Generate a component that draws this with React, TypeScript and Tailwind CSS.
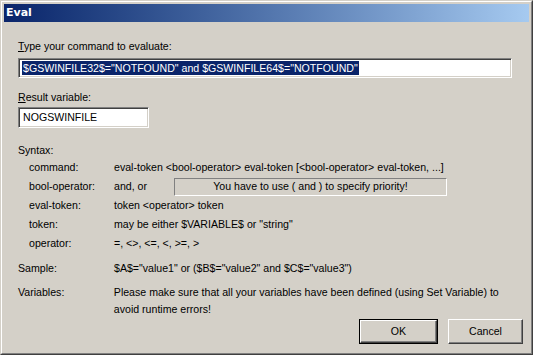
const sunken =
  'border border-t-[#808080] border-l-[#808080] border-r-white border-b-white shadow-[inset_1px_1px_#404040,inset_-1px_-1px_#D4D0C8] bg-white';

const syntaxRows: [string, React.ReactNode][] = [
  ['command:', 'eval-token <bool-operator> eval-token [<bool-operator> eval-token, ...]'],
  [
    'bool-operator:',
    <div className="flex items-center">
      <span className="w-[60px]">and, or</span>
      <div className="w-[273px] h-[18px] border border-t-[#808080] border-l-[#808080] border-r-white border-b-white flex items-center justify-center">
        You have to use ( and ) to specify priority!
      </div>
    </div>,
  ],
  ['eval-token:', 'token <operator> token'],
  ['token:', 'may be either $VARIABLE$ or "string"'],
  ['operator:', '=, <>, <=, <, >=, >'],
];

const raised =
  'h-[23px] border border-t-white border-l-white border-r-[#404040] border-b-[#404040] shadow-[inset_-1px_-1px_#808080] flex items-center justify-center';

export default function App() {
  return (
    <div
      className="w-[533px] h-[355px] bg-[#D4D0C8] border border-t-[#D4D0C8] border-l-[#D4D0C8] border-r-[#404040] border-b-[#404040] text-[10.6px] text-black flex flex-col"
      style={{ fontFamily: '"Liberation Sans", Arial, sans-serif' }}
    >
      <div className="flex-1 flex flex-col border border-t-white border-l-white border-r-[#808080] border-b-[#808080] p-[2px]">
        <div className="h-[18px] bg-gradient-to-r from-[#0A246A] to-[#A6CAF0] flex items-center px-[2px]">
          <span className="text-white font-bold text-[11px]" style={{ fontFamily: '"DejaVu Sans", sans-serif' }}>
            Eval
          </span>
        </div>

        <div className="flex-1 flex flex-col pl-[14px] pr-[16px] pt-[17px]">
          <div className="h-[14px] leading-[14px]">
            <span className="underline">T</span>ype your command to evaluate:
          </div>
          <div className={`mt-[5px] h-[20px] w-[494px] flex items-center pl-[3px] ${sunken}`}>
            <span className="bg-[#0A246A] text-white leading-[14px] px-[1px]">
              $GSWINFILE32$="NOTFOUND" and $GSWINFILE64$="NOTFOUND"
            </span>
          </div>

          <div className="mt-[12px] h-[14px] leading-[14px]">
            <span className="underline">R</span>esult variable:
          </div>
          <div className={`mt-[3px] h-[21px] w-[131px] flex items-center pl-[4px] ${sunken}`}>
            NOGSWINFILE
          </div>

          <div className="mt-[15px] h-[14px] leading-[14px]">Syntax:</div>
          <div className="mt-[1px] flex flex-col">
            {syntaxRows.map(([label, value]) => (
              <div key={label} className="flex items-center h-[19px]">
                <span className="w-[96px] pl-[11px]">{label}</span>
                <div>{value}</div>
              </div>
            ))}
          </div>

          <div className="mt-[7px] flex items-start leading-[17px]">
            <span className="w-[96px]">Sample:</span>
            <span>$A$="value1" or ($B$="value2" and $C$="value3")</span>
          </div>
          <div className="mt-[7px] flex items-start leading-[17px]">
            <span className="w-[96px]">Variables:</span>
            <span className="w-[400px]">
              Please make sure that all your variables have been defined (using Set Variable) to avoid runtime errors!
            </span>
          </div>

          <div className="flex justify-end items-start gap-[10px] mt-[1px] mr-[-10px]">
            <div className="border border-black">
              <div className={`w-[77px] ${raised}`}>OK</div>
            </div>
            <div className={`w-[75px] h-[25px] ${raised}`}>Cancel</div>
          </div>
        </div>
      </div>
    </div>
  );
}
